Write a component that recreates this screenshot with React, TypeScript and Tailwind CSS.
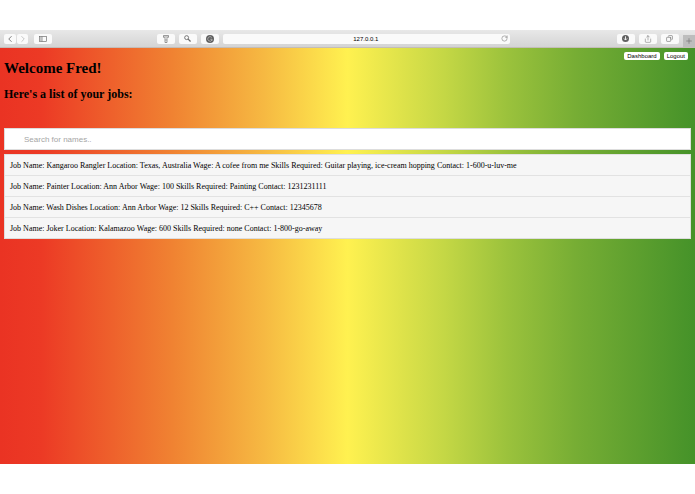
import React, { useState } from 'react';
import { ChevronLeft, ChevronRight, Copy, Plus, RotateCw, Share } from 'lucide-react';

interface Job {
  name: string;
  location: string;
  wage: string;
  skills: string;
  contact: string;
}

const jobs: Job[] = [
  {
    name: 'Kangaroo Rangler',
    location: 'Texas, Australia',
    wage: 'A cofee from me',
    skills: 'Guitar playing, ice-cream hopping',
    contact: '1-600-u-luv-me'
  },
  { name: 'Painter', location: 'Ann Arbor', wage: '100', skills: 'Painting', contact: '1231231111' },
  { name: 'Wash Dishes', location: 'Ann Arbor', wage: '12', skills: 'C++', contact: '12345678' },
  { name: 'Joker', location: 'Kalamazoo', wage: '600', skills: 'none', contact: '1-800-go-away' }
];

interface ToolButtonProps {
  label: string;
  className?: string;
  children: React.ReactNode;
}

function ToolButton({ label, className = 'w-[18px]', children }: ToolButtonProps) {
  return (
    <button
      aria-label={label}
      className={`flex h-[10px] shrink-0 items-center justify-center rounded-xs bg-[#fafafa] text-[#686868] ${className}`}
    >
      {children}
    </button>
  );
}

function BrowserToolbar() {
  return (
    <div className="flex h-[18px] items-center border-b border-[#c4bdb8] bg-linear-to-b from-[#e8e8e8] to-[#d4d4d4] pl-1">
      <div className="flex flex-[155] items-center">
        <ToolButton label="Back" className="w-3">
          <ChevronLeft className="size-2.5" />
        </ToolButton>
        <ToolButton label="Forward" className="ml-px w-[11px]">
          <ChevronRight className="size-2.5 text-[#bcbcbc]" />
        </ToolButton>
        <ToolButton label="Show sidebar" className="ml-1.5 w-[18px]">
          <svg viewBox="0 0 16 12" className="h-1.5 w-2" fill="none" stroke="currentColor" strokeWidth="1.3">
            <rect x="1" y="1" width="14" height="10" />
            <path d="M6 1v10M2.5 3.5h2M2.5 6h2M2.5 8.5h2" />
          </svg>
        </ToolButton>
      </div>

      <div className="flex gap-1">
        <ToolButton label="Flashlight">
          <svg viewBox="0 0 12 16" className="h-2 w-1.5" fill="none" stroke="currentColor" strokeWidth="1.3">
            <path d="M1 1h10v3L8 7v8H4V7L1 4zM1 4h10M6 8.5v3" />
          </svg>
        </ToolButton>
        <ToolButton label="Search page">
          <svg viewBox="0 0 16 16" className="size-[7px]" fill="none" stroke="currentColor" strokeWidth="2">
            <circle cx="6" cy="6" r="4.5" />
            <path d="M9.5 9.5L15 15" strokeWidth="3" />
          </svg>
        </ToolButton>
        <ToolButton label="Grammar check">
          <svg viewBox="0 0 16 16" className="size-2">
            <circle cx="8" cy="8" r="8" fill="#606060" />
            <path d="M11.5 5A4.5 4.5 0 1 0 12 10M12.5 8.5H8.5M12 8.5v3" fill="none" stroke="#ccc" strokeWidth="1.3" />
          </svg>
        </ToolButton>
      </div>

      <div className="ml-1 flex h-[10px] flex-[282] items-center rounded-xs bg-[#fafafa] pr-0.5 pl-2">
        <input
          aria-label="Address"
          defaultValue="127.0.0.1"
          className="h-[10px] min-w-0 flex-1 bg-transparent text-center font-['Liberation_Sans',sans-serif] text-[6px] leading-[10px] text-black outline-none"
        />
        <button aria-label="Reload" className="text-[#808080]">
          <RotateCw className="size-[7px]" />
        </button>
      </div>

      <div className="flex flex-[188] items-center justify-end gap-1 self-stretch">
        <ToolButton label="Downloads">
          <svg viewBox="0 0 16 16" className="size-[7px]">
            <circle cx="8" cy="8" r="8" fill="#606060" />
            <path d="M8 3v8M4.5 8L8 11.5 11.5 8" fill="none" stroke="#fff" strokeWidth="2" />
          </svg>
        </ToolButton>
        <ToolButton label="Share">
          <Share className="size-2" strokeWidth={1.5} />
        </ToolButton>
        <ToolButton label="Show tabs">
          <Copy className="size-[7px] rotate-90" strokeWidth={2} />
        </ToolButton>
        <button
          aria-label="New tab"
          className="flex h-3 w-3 items-center justify-center self-end bg-[#bdbdbd] text-[#707070]"
        >
          <Plus className="size-2" strokeWidth={2} />
        </button>
      </div>
    </div>
  );
}

function JobItem({ job }: { job: Job }) {
  return (
    <li className="h-[21px] border-t border-[#e2e2e2] px-[5px] text-[8px] leading-[21px]">
      Job Name: {job.name} Location: {job.location} Wage: {job.wage} Skills Required: {job.skills} Contact:{' '}
      {job.contact}
    </li>
  );
}

export default function App() {
  const [query, setQuery] = useState('');

  const visibleJobs = jobs.filter((job) => job.name.toLowerCase().includes(query.toLowerCase()));

  return (
    <div className="flex min-h-screen flex-col bg-white py-[30px] font-['Liberation_Serif',serif] text-black">
      <BrowserToolbar />

      <main className="flex-1 bg-[linear-gradient(to_right,#ea3323_0%,#ec3a25_6%,#f08332_25%,#f6b942_38%,#fff150_50%,#c4d745_64%,#9bc23c_73%,#76ad34_83%,#459229_100%)] px-1 pt-1">
        {/* Account links */}
        <nav className="flex h-2 justify-end gap-1 pr-[3px] font-['Liberation_Sans',sans-serif] text-[6px] leading-2">
          <button className="rounded-xs bg-white px-[3px]">Dashboard</button>
          <button className="rounded-xs bg-white px-[3px]">Logout</button>
        </nav>

        <h1 className="text-[15px] leading-4 font-bold">Welcome Fred!</h1>
        <h2 className="mt-2.5 text-[12px] leading-4 font-bold">Here's a list of your jobs:</h2>

        {/* Search box */}
        <input
          type="text"
          aria-label="Search for names"
          placeholder="Search for names.."
          value={query}
          onChange={(e) => setQuery(e.target.value)}
          className="mt-[26px] block h-[22px] w-full border border-[#ddd] bg-white pl-[19px] font-['Liberation_Sans',sans-serif] text-[8px] outline-none placeholder:text-[#a5a5a5]"
        />

        {/* Job list */}
        <ul className="mt-1 border-x border-b border-[#ddd] bg-[#f6f6f6]">
          {visibleJobs.map((job) => (
            <JobItem key={job.name} job={job} />
          ))}
        </ul>
      </main>
    </div>
  );
}
